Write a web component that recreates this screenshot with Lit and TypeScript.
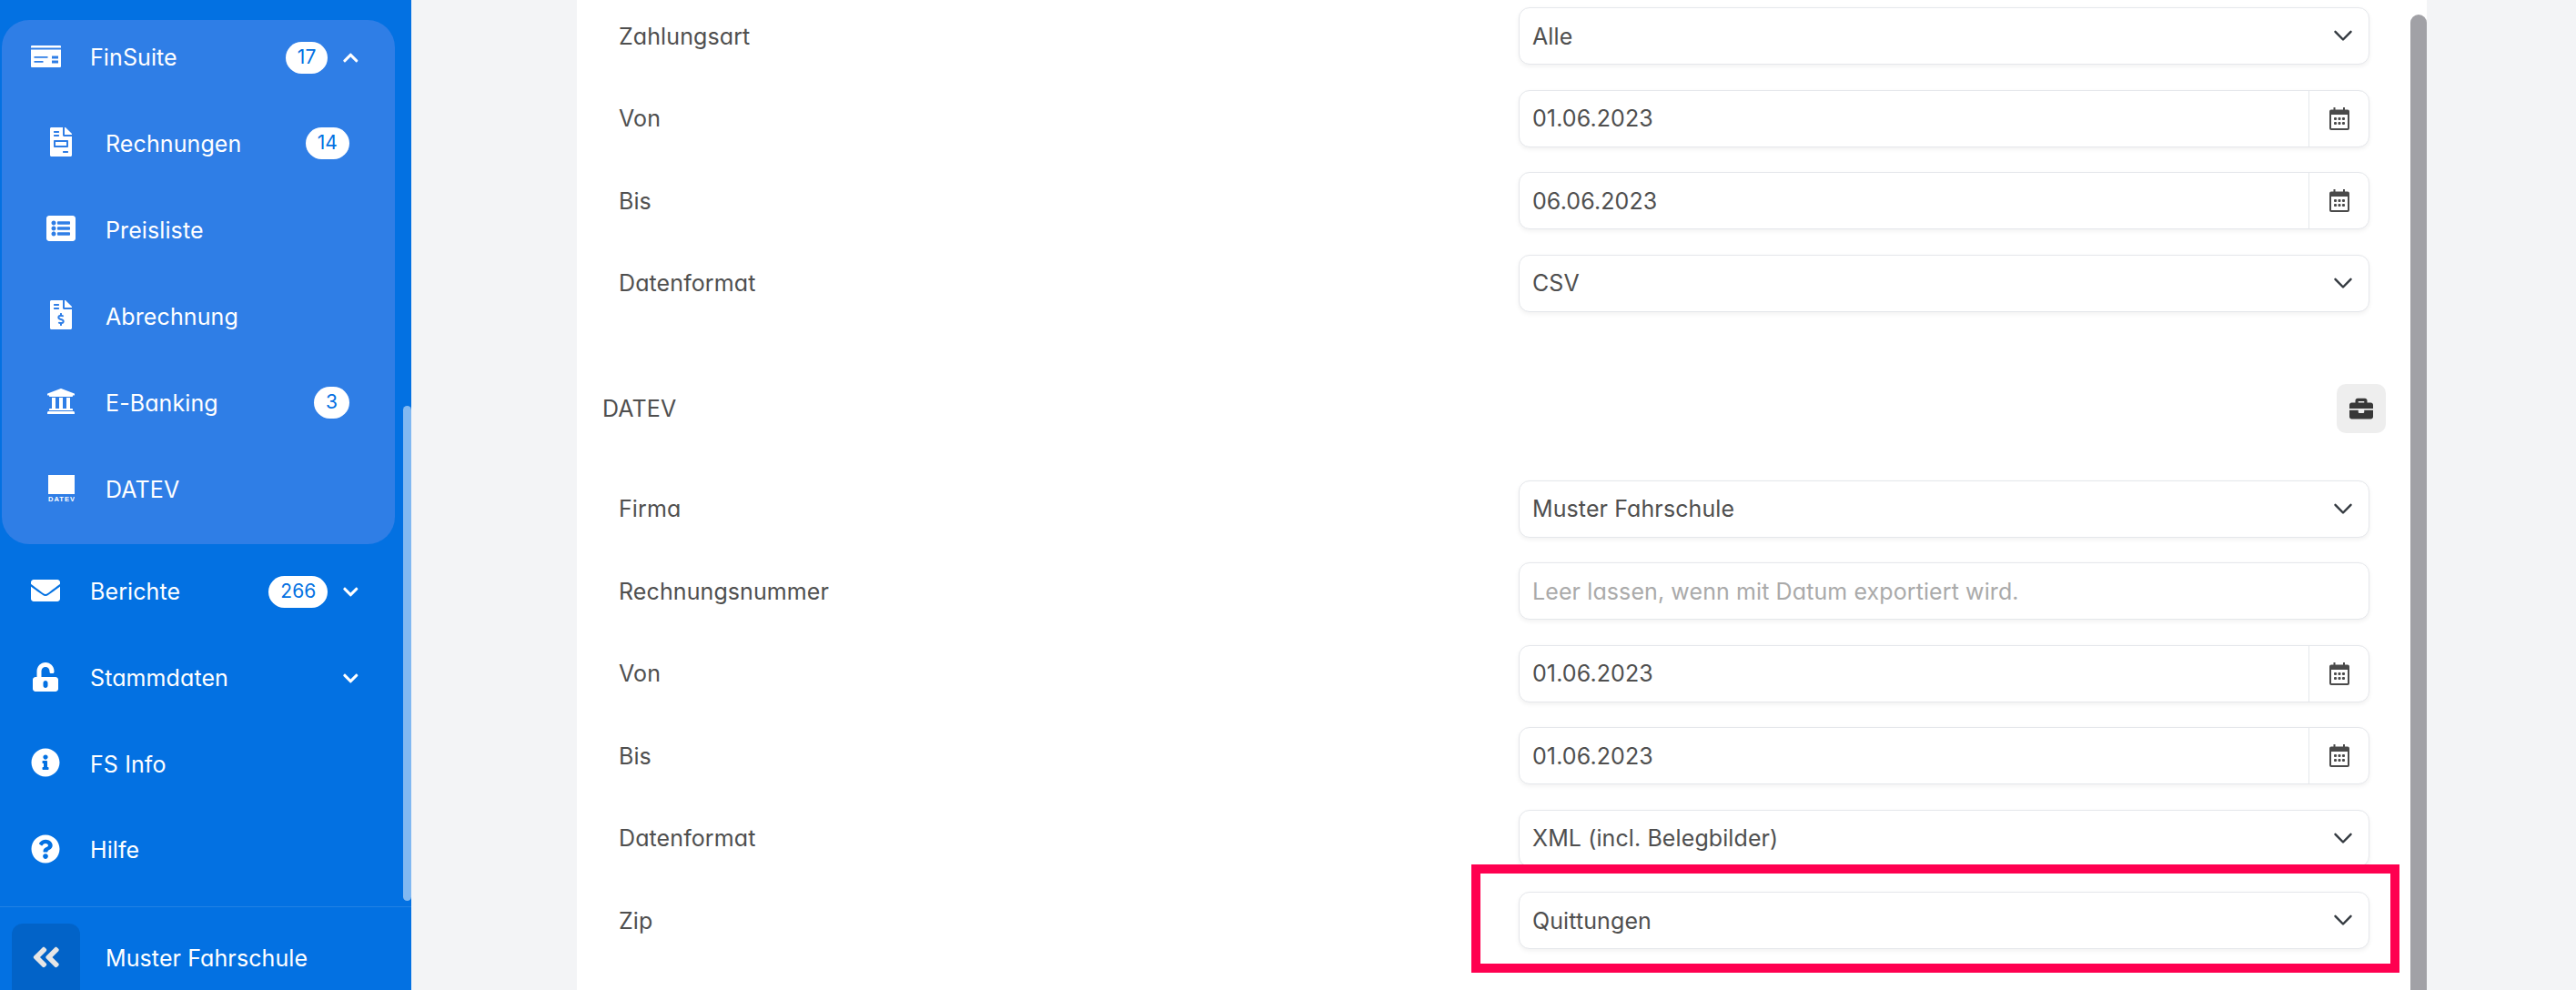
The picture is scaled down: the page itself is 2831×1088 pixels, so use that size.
import { LitElement, css, html, svg } from 'lit';
import { customElement } from 'lit/decorators.js';

const ICONS: Record<string, [number, string]> = {
  envelope: [512, 'M502.3 190.8c3.9-3.1 9.7-.2 9.7 4.7V400c0 26.5-21.5 48-48 48H48c-26.5 0-48-21.5-48-48V195.6c0-5 5.7-7.8 9.7-4.7 22.4 17.4 52.1 39.5 154.1 113.6 21.1 15.4 56.7 47.8 92.2 47.6 35.7.3 72-32.8 92.3-47.6 102-74.1 131.6-96.3 154-113.7zM256 320c23.2.4 56.6-29.2 73.4-41.4 132.7-96.3 142.8-104.7 173.4-128.7 5.8-4.5 9.2-11.5 9.2-18.9v-19c0-26.5-21.5-48-48-48H48C21.5 64 0 85.5 0 112v19c0 7.4 3.4 14.3 9.2 18.9 30.6 23.9 40.7 32.4 173.4 128.7 16.8 12.2 50.2 41.8 73.4 41.4z'],
  info: [512, 'M256 8C119.043 8 8 119.083 8 256c0 136.997 111.043 248 248 248s248-111.003 248-248C504 119.083 392.957 8 256 8zm0 110c23.196 0 42 18.804 42 42s-18.804 42-42 42-42-18.804-42-42 18.804-42 42-42zm56 254c0 6.627-5.373 12-12 12h-88c-6.627 0-12-5.373-12-12v-24c0-6.627 5.373-12 12-12h12v-64h-12c-6.627 0-12-5.373-12-12v-24c0-6.627 5.373-12 12-12h64c6.627 0 12 5.373 12 12v100h12c6.627 0 12 5.373 12 12v24z'],
  question: [512, 'M504 256c0 136.997-111.043 248-248 248S8 392.997 8 256C8 119.083 119.043 8 256 8s248 111.083 248 248zM262.655 90c-54.497 0-89.255 22.957-116.549 63.758-3.536 5.286-2.353 12.415 2.715 16.258l34.699 26.31c5.205 3.947 12.621 3.008 16.665-2.122 17.864-22.658 30.113-35.797 57.303-35.797 20.429 0 45.698 13.148 45.698 32.958 0 14.976-12.363 22.667-32.534 33.976C247.128 238.528 216 254.941 216 296v4c0 6.627 5.373 12 12 12h56c6.627 0 12-5.373 12-12v-1.333c0-28.462 83.186-29.647 83.186-106.667 0-58.002-60.165-102-116.531-102zM256 338c-25.365 0-46 20.635-46 46 0 25.364 20.635 46 46 46s46-20.636 46-46c0-25.365-20.635-46-46-46z'],
  chevronDown: [448, 'M207.029 381.476L12.686 187.132c-9.373-9.373-9.373-24.569 0-33.941l22.667-22.667c9.357-9.357 24.522-9.375 33.901-.04L224 284.505l154.745-154.021c9.379-9.335 24.544-9.317 33.901.04l22.667 22.667c9.373 9.373 9.373 24.569 0 33.941L240.971 381.476c-9.373 9.372-24.569 9.372-33.942 0z'],
  chevronUp: [448, 'M240.971 130.524l194.343 194.343c9.373 9.373 9.373 24.569 0 33.941l-22.667 22.667c-9.357 9.357-24.522 9.375-33.901.04L224 227.495 69.255 381.516c-9.379 9.335-24.544 9.317-33.901-.04l-22.667-22.667c-9.373-9.373-9.373-24.569 0-33.941L207.03 130.525c9.372-9.373 24.568-9.373 33.941-.001z'],
  doubleLeft: [448, 'M223.7 239l136-136c9.4-9.4 24.6-9.4 33.9 0l22.6 22.6c9.4 9.4 9.4 24.6 0 33.9L319.9 256l96.4 96.4c9.4 9.4 9.4 24.6 0 33.9L393.7 409c-9.4 9.4-24.6 9.4-33.9 0l-136-136c-9.5-9.4-9.5-24.6-.1-34zm-192 34l136 136c9.4 9.4 24.6 9.4 33.9 0l22.6-22.6c9.4-9.4 9.4-24.6 0-33.9L127.9 256l96.4-96.4c9.4-9.4 9.4-24.6 0-33.9L201.7 103c-9.4-9.4-24.6-9.4-33.9 0l-136 136c-9.5 9.4-9.5 24.6-.1 34z'],
  unlock: [448, 'M400 256H152V152.9c0-39.6 31.7-72.5 71.3-72.9 40-.4 72.7 32.1 72.7 72v16c0 13.3 10.7 24 24 24h32c13.3 0 24-10.7 24-24v-16C376 68 307.5-.3 223.5 0 139.5.3 72 69.5 72 153.5V256H48c-26.5 0-48 21.5-48 48v160c0 26.5 21.5 48 48 48h352c26.5 0 48-21.5 48-48V304c0-26.5-21.5-48-48-48zM264 408c0 22.1-17.9 40-40 40s-40-17.9-40-40v-48c0-22.1 17.9-40 40-40s40 17.9 40 40v48z'],
  listAlt: [512, 'M464 480H48c-26.51 0-48-21.49-48-48V80c0-26.51 21.49-48 48-48h416c26.51 0 48 21.49 48 48v352c0 26.51-21.49 48-48 48zM128 120c-22.091 0-40 17.909-40 40s17.909 40 40 40 40-17.909 40-40-17.909-40-40-40zm0 96c-22.091 0-40 17.909-40 40s17.909 40 40 40 40-17.909 40-40-17.909-40-40-40zm0 96c-22.091 0-40 17.909-40 40s17.909 40 40 40 40-17.909 40-40-17.909-40-40-40zm288-136v-32c0-6.627-5.373-12-12-12H204c-6.627 0-12 5.373-12 12v32c0 6.627 5.373 12 12 12h200c6.627 0 12-5.373 12-12zm0 96v-32c0-6.627-5.373-12-12-12H204c-6.627 0-12 5.373-12 12v32c0 6.627 5.373 12 12 12h200c6.627 0 12-5.373 12-12zm0 96v-32c0-6.627-5.373-12-12-12H204c-6.627 0-12 5.373-12 12v32c0 6.627 5.373 12 12 12h200c6.627 0 12-5.373 12-12z'],
  bank: [512, 'M496 128v16a8 8 0 0 1-8 8h-24v12c0 6.627-5.373 12-12 12H60c-6.627 0-12-5.373-12-12v-12H24a8 8 0 0 1-8-8v-16a8 8 0 0 1 4.941-7.392l232-88a7.996 7.996 0 0 1 6.118 0l232 88A8 8 0 0 1 496 128zm-24 304H40c-13.255 0-24 10.745-24 24v16a8 8 0 0 0 8 8h464a8 8 0 0 0 8-8v-16c0-13.255-10.745-24-24-24zM96 192v192H60c-6.627 0-12 5.373-12 12v20h416v-20c0-6.627-5.373-12-12-12h-36V192h-64v192h-64V192h-64v192h-64V192H96z'],
  invoice: [384, 'M288 256H96v64h192v-64zm89-151L279.1 7c-4.5-4.5-10.6-7-17-7H256v128h128v-6.1c0-6.3-2.5-12.4-7-16.9zm-153 31V0H24C10.7 0 0 10.7 0 24v464c0 13.3 10.7 24 24 24h336c13.3 0 24-10.7 24-24V160H248c-13.2 0-24-10.8-24-24zM64 72c0-4.42 3.58-8 8-8h80c4.42 0 8 3.58 8 8v16c0 4.42-3.58 8-8 8H72c-4.42 0-8-3.58-8-8V72zm0 64c0-4.42 3.58-8 8-8h80c4.42 0 8 3.58 8 8v16c0 4.42-3.58 8-8 8H72c-4.42 0-8-3.58-8-8v-16zm256 304c0 4.42-3.58 8-8 8h-80c-4.42 0-8-3.58-8-8v-16c0-4.42 3.58-8 8-8h80c4.42 0 8 3.58 8 8v16zm0-200v96c0 8.84-7.16 16-16 16H80c-8.84 0-16-7.16-16-16v-96c0-8.84 7.16-16 16-16h224c8.84 0 16 7.16 16 16z'],
  invoiceDollar: [384, 'M377 105L279.1 7c-4.5-4.5-10.6-7-17-7H256v128h128v-6.1c0-6.3-2.5-12.4-7-16.9zm-153 31V0H24C10.7 0 0 10.7 0 24v464c0 13.3 10.7 24 24 24h336c13.3 0 24-10.7 24-24V160H248c-13.2 0-24-10.8-24-24zM64 72c0-4.42 3.58-8 8-8h80c4.42 0 8 3.58 8 8v16c0 4.42-3.58 8-8 8H72c-4.42 0-8-3.58-8-8V72zm0 80v-16c0-4.42 3.58-8 8-8h80c4.42 0 8 3.58 8 8v16c0 4.42-3.58 8-8 8H72c-4.42 0-8-3.58-8-8zm144 263.88V440c0 4.42-3.58 8-8 8h-16c-4.42 0-8-3.58-8-8v-24.29c-11.29-.58-22.27-4.52-31.37-11.35-3.9-2.93-4.1-8.77-.57-12.14l11.75-11.21c2.77-2.64 6.89-2.76 10.13-.73 3.87 2.42 8.26 3.72 12.82 3.72h28.11c6.5 0 11.8-5.92 11.8-13.19 0-5.95-3.61-11.19-8.77-12.73l-45-13.5c-18.59-5.58-31.58-23.42-31.58-43.39 0-24.52 19.05-44.44 42.67-45.07V232c0-4.42 3.58-8 8-8h16c4.42 0 8 3.58 8 8v24.29c11.29.58 22.27 4.51 31.37 11.35 3.9 2.93 4.1 8.77.57 12.14l-11.75 11.21c-2.77 2.64-6.89 2.76-10.13.73-3.87-2.43-8.26-3.72-12.82-3.72h-28.11c-6.5 0-11.8 5.92-11.8 13.19 0 5.95 3.61 11.19 8.77 12.73l45 13.5c18.59 5.58 31.58 23.42 31.58 43.39 0 24.53-19.05 44.44-42.67 45.07z'],
  briefcase: [512, 'M320 336c0 8.84-7.16 16-16 16h-96c-8.84 0-16-7.16-16-16v-48H0v144c0 25.6 22.4 48 48 48h416c25.6 0 48-22.4 48-48V288H320v48zm144-208h-80V80c0-25.6-22.4-48-48-48H176c-25.6 0-48 22.4-48 48v48H48c-25.6 0-48 22.4-48 48v80h512v-80c0-25.6-22.4-48-48-48zm-144 0H192V96h128v32z'],
};

function icon(name: string, height: number) {
  const [w, d] = ICONS[name];
  return html`<svg width=${(height * w) / 512} height=${height} viewBox="0 0 ${w} 512" fill="currentColor">
    ${svg`<path d=${d}></path>`}
  </svg>`;
}

const cardIcon = html`<svg width="33" height="24" viewBox="0 0 33 24" fill="currentColor">
  <path fill-rule="evenodd" d="M1 0h31a1 1 0 0 1 1 1v1.500H0V1a1 1 0 0 1 1-1zM0 4.500h33V23a1 1 0 0 1-1 1H1a1 1 0 0 1-1-1zM3.500 12v1.800h15V12zM3.500 17v1.800h10V17zM23 11.500v3h7v-3zM23 16.500v3h7v-3z"></path>
</svg>`;

const datevIcon = html`<svg width="29" height="29" viewBox="0 0 29 29">
  <rect width="29" height="21" fill="#fff"></rect>
  <text x="14.500" y="29" text-anchor="middle" fill="#fff" font-family="Liberation Sans, sans-serif" font-size="7.500" font-weight="700" textLength="29">DATEV</text>
</svg>`;

const calendarIcon = html`<svg width="22" height="25" viewBox="0 0 22 25" fill="#4a4a4a">
  <path fill-rule="evenodd" d="M4.500 0h2v2.500h8.500V0h2v2.500H20a2 2 0 0 1 2 2V23a2 2 0 0 1-2 2H2a2 2 0 0 1-2-2V4.500a2 2 0 0 1 2-2h2.500zM2 8v15h18V8z"></path>
  <rect x="5" y="11" width="3" height="3" rx="1"></rect><rect x="9.500" y="11" width="3" height="3" rx="1"></rect><rect x="14" y="11" width="3" height="3" rx="1"></rect>
  <rect x="5" y="16" width="3" height="3" rx="1"></rect><rect x="9.500" y="16" width="3" height="3" rx="1"></rect><rect x="14" y="16" width="3" height="3" rx="1"></rect>
</svg>`;

const selectArrow = html`<svg width="20" height="13" viewBox="0 0 20 13" fill="none" stroke="#343a40" stroke-width="2.400" stroke-linecap="round" stroke-linejoin="round">
  <path d="M1.500 1.800 10 10.500l8.500-8.700"></path>
</svg>`;

@customElement('side-bar')
class SideBar extends LitElement {
  static styles = css`
    :host {
      display: flex;
      flex-direction: column;
      flex: none;
      position: relative;
      width: 452px;
      height: 1088px;
      overflow: hidden;
      background: #0371e2;
      color: #fff;
      font-family: Inter, 'Noto Sans', sans-serif;
      font-feature-settings: 'cv11';
      font-size: 25px;
      font-weight: 400;
      letter-spacing: 0.1px;
    }
    nav {
      flex: 1;
      padding: 22px 18px 0 2px;
    }
    .group {
      height: 576px;
      margin-bottom: 5px;
      padding-top: 6px;
      background: #2f7ee6;
      border-radius: 30px;
      box-sizing: border-box;
    }
    .row {
      display: flex;
      align-items: center;
      height: 94.700px;
      padding: 0 40px 0 31px;
      box-sizing: border-box;
    }
    .row.head {
      height: 82px;
      margin-top: -6px;
      margin-bottom: 6px;
    }
    .row.sub {
      height: 95px;
      padding: 0 50px 0 48px;
    }
    .ic {
      display: flex;
      justify-content: center;
      flex: none;
      width: 34px;
      margin-right: 32px;
      margin-top: -3px;
    }
    .label {
      flex: 1;
      white-space: nowrap;
    }
    .badge {
      flex: none;
      min-width: 38px;
      height: 35px;
      padding: 0 13px;
      box-sizing: border-box;
      border-radius: 18px;
      background: #fff;
      color: #0371e2;
      font-size: 21px;
      line-height: 34px;
      text-align: center;
    }
    .caret {
      display: flex;
      flex: none;
      margin-left: 17px;
    }
    footer {
      display: flex;
      flex: none;
      gap: 28px;
      height: 92px;
      padding: 18px 0 0 13px;
      box-sizing: border-box;
      border-top: 1px solid rgba(255, 255, 255, 0.12);
    }
    .collapse {
      display: flex;
      align-items: center;
      justify-content: center;
      width: 75px;
      height: 90px;
      padding-bottom: 17px;
      box-sizing: border-box;
      border-radius: 12px;
      background: #0263c8;
      color: #e6e6e6;
    }
    .owner {
      margin-top: 20px;
      line-height: 36px;
      white-space: nowrap;
    }
    .thumb {
      position: absolute;
      top: 446px;
      right: 0;
      width: 9px;
      height: 544px;
      border-radius: 5px;
      background: rgba(255, 255, 255, 0.5);
    }
  `;

  private row(ic: unknown, label: string, badge?: string, caret?: string, cls = '') {
    return html`<div class="row ${cls}">
      <span class="ic">${ic}</span>
      <span class="label">${label}</span>
      ${badge ? html`<span class="badge">${badge}</span>` : ''}
      ${caret ? html`<span class="caret">${icon(caret, 19)}</span>` : ''}
    </div>`;
  }

  render() {
    return html`
      <nav>
        <div class="group">
          ${this.row(cardIcon, 'FinSuite', '17', 'chevronUp', 'head')}
          ${this.row(icon('invoice', 32), 'Rechnungen', '14', undefined, 'sub')}
          ${this.row(icon('listAlt', 32), 'Preisliste', undefined, undefined, 'sub')}
          ${this.row(icon('invoiceDollar', 32), 'Abrechnung', undefined, undefined, 'sub')}
          ${this.row(icon('bank', 32), 'E-Banking', '3', undefined, 'sub')}
          ${this.row(datevIcon, 'DATEV', undefined, undefined, 'sub')}
        </div>
        ${this.row(icon('envelope', 32), 'Berichte', '266', 'chevronDown')}
        ${this.row(icon('unlock', 32), 'Stammdaten', undefined, 'chevronDown')}
        ${this.row(icon('info', 32), 'FS Info')}
        ${this.row(icon('question', 32), 'Hilfe')}
      </nav>
      <footer>
        <div class="collapse">${icon('doubleLeft', 36)}</div>
        <div class="owner">Muster Fahrschule</div>
      </footer>
      <div class="thumb"></div>
    `;
  }
}

@customElement('export-form')
class ExportForm extends LitElement {
  static styles = css`
    :host {
      display: block;
      position: relative;
      width: 2033px;
      height: 1088px;
      margin-left: 182px;
      overflow: hidden;
      box-sizing: border-box;
      padding: 8px 0 0 28px;
      background: #fff;
      color: #4f4f4f;
      font-family: Inter, 'Noto Sans', sans-serif;
      font-feature-settings: 'cv11';
      font-size: 25px;
      letter-spacing: 0.1px;
    }
    .rows {
      display: flex;
      flex-direction: column;
      gap: 27.500px;
    }
    .row {
      display: grid;
      grid-template-columns: 989px 935px;
      align-items: center;
      padding-left: 18px;
      height: 63px;
    }
    .control {
      display: flex;
      align-items: center;
      height: 63px;
      box-sizing: border-box;
      border: 1px solid #e5e7eb;
      border-radius: 12px;
      box-shadow: 0 2px 5px rgba(0, 0, 0, 0.06);
      background: #fff;
    }
    .value {
      flex: 1;
      padding-left: 14px;
      white-space: nowrap;
    }
    .value.empty {
      color: #aaaaaa;
    }
    .arrow {
      display: flex;
      margin-right: 18px;
    }
    .addon {
      display: flex;
      align-items: center;
      justify-content: center;
      flex: none;
      align-self: stretch;
      width: 66px;
      border-left: 1px solid #e5e7eb;
      box-sizing: border-box;
    }
    .section {
      display: flex;
      align-items: center;
      justify-content: space-between;
      height: 54px;
      margin: 79px 17px 52px 0;
      padding-right: 28px;
    }
    .tool {
      display: flex;
      align-items: center;
      justify-content: center;
      width: 54px;
      height: 54px;
      border-radius: 10px;
      background: #eeeeee;
      color: #383838;
    }
    .mark {
      position: absolute;
      top: 950px;
      left: 983px;
      width: 1020px;
      height: 119px;
      box-sizing: border-box;
      border: 10px solid #ff0050;
    }
    .thumb {
      position: absolute;
      top: 16px;
      right: 0;
      bottom: 0;
      width: 18px;
      border-radius: 9px 9px 0 0;
      background: #a1a1a6;
    }
  `;

  private select(label: string, value: string) {
    return html`<div class="row">
      <span>${label}</span>
      <div class="control">
        <span class="value">${value}</span>
        <span class="arrow">${selectArrow}</span>
      </div>
    </div>`;
  }

  private date(label: string, value: string) {
    return html`<div class="row">
      <span>${label}</span>
      <div class="control">
        <span class="value">${value}</span>
        <span class="addon">${calendarIcon}</span>
      </div>
    </div>`;
  }

  render() {
    return html`
      <div class="rows">
        ${this.select('Zahlungsart', 'Alle')}
        ${this.date('Von', '01.06.2023')}
        ${this.date('Bis', '06.06.2023')}
        ${this.select('Datenformat', 'CSV')}
      </div>
      <div class="section">
        <span>DATEV</span>
        <span class="tool">${icon('briefcase', 26)}</span>
      </div>
      <div class="rows">
        ${this.select('Firma', 'Muster Fahrschule')}
        <div class="row">
          <span>Rechnungsnummer</span>
          <div class="control">
            <span class="value empty">Leer lassen, wenn mit Datum exportiert wird.</span>
          </div>
        </div>
        ${this.date('Von', '01.06.2023')}
        ${this.date('Bis', '01.06.2023')}
        ${this.select('Datenformat', 'XML (incl. Belegbilder)')}
        ${this.select('Zip', 'Quittungen')}
      </div>
      <div class="mark"></div>
      <div class="thumb"></div>
    `;
  }
}

@customElement('app-root')
export class AppRoot extends LitElement {
  static styles = css`
    :host {
      display: flex;
      width: 2831px;
      height: 1088px;
      overflow: hidden;
      background: #f3f4f6;
    }
  `;

  render() {
    return html`<side-bar></side-bar><export-form></export-form>`;
  }
}
